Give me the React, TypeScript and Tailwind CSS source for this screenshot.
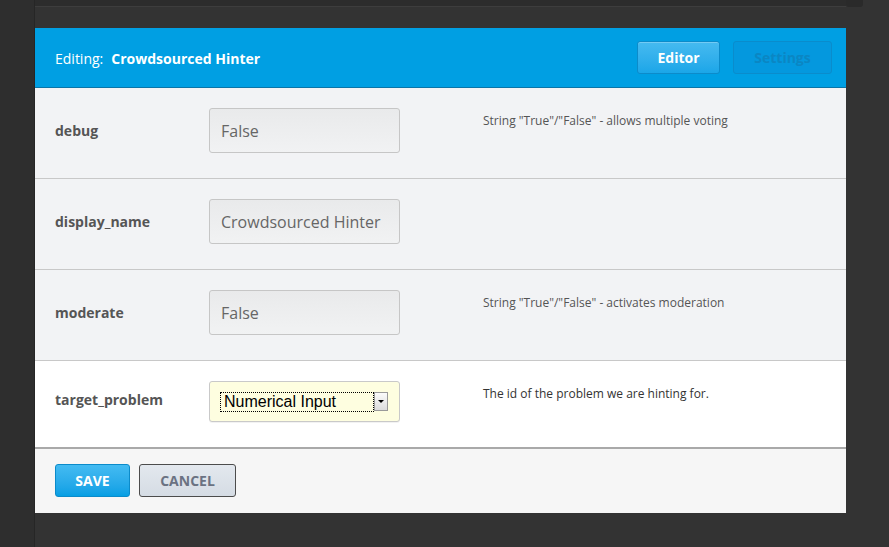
import React from "react";

const font = { fontFamily: '"Open Sans", "Noto Sans", sans-serif' };

function Row({
  label,
  value,
  desc,
  last,
}: {
  label: string;
  value?: string;
  desc?: string;
  last?: boolean;
}) {
  return (
    <div
      className={
        "flex items-start pl-[20px] pt-[20px] " +
        (last ? "h-[86px] bg-white" : "h-[91px] border-b border-[#c8c8c8] bg-[#f2f3f5]")
      }
    >
      <div
        className={
          "flex w-[154px] items-center text-[14px] font-bold text-[#555] " +
          (last ? "h-[36px]" : "h-[45px]")
        }
      >
        {label}
      </div>
      {last ? (
        <div className="flex h-[41px] w-[191px] items-center rounded-[3px] border border-[#c9c9c9] bg-[#fefee0] pl-[10px] shadow-[0_1px_0_rgba(0,0,0,0.05)]">
          <div className="flex h-[20px] items-center">
            <div
              className="flex h-[20px] w-[154px] items-center border border-dotted border-black pl-[3px] text-[16px] text-black"
              style={{ fontFamily: '"Liberation Sans", Arial, sans-serif' }}
            >
              Numerical Input
            </div>
            <div className="flex h-[19px] w-[14px] items-center justify-center border border-[#9a9a9a] bg-gradient-to-b from-[#fbfbfb] to-[#dcdcdc]">
              <div className="h-0 w-0 border-x-[3px] border-t-[3px] border-x-transparent border-t-black" />
            </div>
          </div>
        </div>
      ) : (
        <div className="flex h-[45px] w-[191px] items-center rounded-[3px] border border-[#c6c6c6] bg-gradient-to-b from-[#e9eaeb] to-[#f1f2f3] pl-[11px] text-[16px] text-[#666]">
          {value}
        </div>
      )}
      <div className={"ml-[83px] text-[12px] leading-[16px] " + (last ? "mt-[5px] text-[#333]" : "mt-[5px] text-[#555]")}>
        {desc}
      </div>
    </div>
  );
}

export default function App() {
  return (
    <div className="flex h-[547px] w-[889px] overflow-hidden bg-[#333]" style={font}>
      <div className="h-full w-[35px] border-r border-[#262626] bg-[#2e2e2e]" />
      <div className="flex w-[811px] flex-col">
        <div className="h-[7px] border-b border-[#3d3d3d] bg-[#2c2c2c]" />
        <div className="h-[21px]" />
        <div className="flex flex-col">
          <div className="flex h-[60px] items-center border-b border-[#0a75a8] bg-[#009fe3] pl-[20px] pr-[14px]">
            <div className="flex-1 pt-[2px] text-[14px] text-white">
              <span>Editing:</span>
              <span className="ml-[8px] font-bold">Crowdsourced Hinter</span>
            </div>
            <div className="flex h-[33px] w-[83px] items-center justify-center rounded-[3px] border border-[#0c8bca] bg-gradient-to-b from-[#45baf0] to-[#1aa6e8] text-[14px] font-bold text-white shadow-[inset_0_1px_0_rgba(255,255,255,0.25)]">
              Editor
            </div>
            <div className="ml-[13px] flex h-[33px] w-[99px] items-center justify-center rounded-[3px] border border-[#0a8ccc] bg-[#0498de] text-[14px] font-bold text-[#0b86c3]">
              Settings
            </div>
          </div>
          <Row label="debug" value="False" desc={'String "True"/"False" - allows multiple voting'} />
          <Row label="display_name" value="Crowdsourced Hinter" />
          <Row label="moderate" value="False" desc={'String "True"/"False" - activates moderation'} />
          <Row label="target_problem" desc="The id of the problem we are hinting for." last />
          <div className="flex h-[66px] items-start gap-[9px] border-t-2 border-[#a9a9a9] bg-[#f6f6f6] pl-[20px] pt-[15px]">
            <div className="flex h-[33px] w-[75px] items-center justify-center rounded-[3px] border border-[#0b8bca] bg-gradient-to-b from-[#43bbf2] to-[#049fe4] text-[14px] font-bold text-white">
              SAVE
            </div>
            <div className="flex h-[33px] w-[97px] items-center justify-center rounded-[3px] border border-[#4c4c4c] bg-gradient-to-b from-[#e3e8ee] to-[#d5dce4] text-[14px] font-bold text-[#6b7282]">
              CANCEL
            </div>
          </div>
        </div>
      </div>
      <div className="flex-1">
        <div className="h-[7px] w-[17px] rounded-b-[3px] bg-[#2a2a2a]" />
      </div>
    </div>
  );
}
